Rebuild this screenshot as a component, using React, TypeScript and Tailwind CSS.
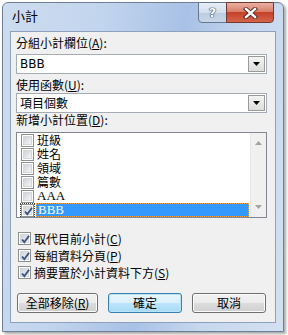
import React from "react";

const cjk = "font-['Noto_Sans_CJK_TC','Noto_Sans_CJK_JP',sans-serif]";

function Box({ checked }: { checked?: boolean }) {
  return (
    <span className="relative flex h-[13px] w-[13px] shrink-0 items-center justify-center border border-[#8e8f8f] bg-white">
      <span className="h-[9px] w-[9px] border border-[#d3d6da] bg-[linear-gradient(135deg,#cfd3d9,#f4f4f4)]" />
      {checked && (
        <svg className="absolute left-[1px] top-[1px]" width="11" height="11" viewBox="0 0 11 11">
          <path d="M2 5.5 L4.3 8.2 L9 1.8" fill="none" stroke="#3b5488" strokeWidth="1.9" />
        </svg>
      )}
    </span>
  );
}

function Combo({ value, latin }: { value: string; latin?: boolean }) {
  return (
    <div className="flex h-[20px] w-[251px] items-center justify-between border border-[#a5acb5] bg-white pl-[3px] pr-[1px]">
      <span className={`text-[12px] leading-[14px] text-black ${latin ? "font-['DejaVu_Sans',sans-serif] text-[11px]" : cjk}`}>
        {value}
      </span>
      <span className="flex h-[16px] w-[17px] items-center justify-center border border-[#9a9a9a] bg-[linear-gradient(#f4f4f4,#dcdcdc)]">
        <svg width="7" height="4" viewBox="0 0 7 4">
          <path d="M0 0 H7 L3.5 4 Z" fill="#000" />
        </svg>
      </span>
    </div>
  );
}

function Btn({ label, primary, w }: { label: React.ReactNode; primary?: boolean; w: string }) {
  return (
    <div
      className={`flex h-[20px] ${w} items-center justify-center rounded-[3px] border text-[12px] leading-[14px] text-black ${cjk} ${
        primary
          ? "border-[#3c7fb1] bg-[linear-gradient(#eaf6fd_0%,#d9f0fc_50%,#bee6fd_50%,#a7d9f5_100%)] shadow-[inset_0_0_0_1px_#b9e3f8]"
          : "border-[#707070] bg-[linear-gradient(#f2f2f2_0%,#ebebeb_50%,#dddddd_50%,#cfcfcf_100%)] shadow-[inset_0_0_0_1px_#fbfbfb]"
      }`}
    >
      {label}
    </div>
  );
}

export default function App() {
  const items = ["班級", "姓名", "領域", "篇數", "AAA", "BBB"];
  return (
    <div className="h-[335px] w-[288px] overflow-hidden bg-white pl-[2px] pt-[2px]">
      <div className="flex h-[330px] w-[282px] flex-col rounded-t-[6px] border border-[#6f7f95] bg-[linear-gradient(100deg,#cddcef_0%,#c2d5ee_30%,#a8c1e6_55%,#c6d7ee_75%,#d3e0f1_100%)] shadow-[2px_2px_3px_rgba(0,0,0,0.35)]">
        {/* title bar */}
        <div className="flex h-[28px] items-start justify-between pl-[9px] pr-[9px]">
          <span className={`pt-[5px] text-[13px] leading-[16px] text-black ${cjk}`}>小計</span>
          <div className="-mt-[1px] flex">
            <div className="flex h-[21px] w-[29px] items-center justify-center rounded-bl-[4px] border border-[#667890] bg-[linear-gradient(#e6edf6_0%,#d4dfed_50%,#bccbe0_51%,#c9d6e7_100%)]">
              <span className="font-['DejaVu_Sans',sans-serif] text-[13px] font-bold leading-none text-white [text-shadow:0_0_1px_#2a3d5a,0_0_1px_#2a3d5a,0_0_1px_#2a3d5a]">
                ?
              </span>
            </div>
            <div className="-ml-[1px] flex h-[21px] w-[48px] items-center justify-center rounded-br-[4px] border border-[#6f3a30] bg-[linear-gradient(#eab0a2_0%,#d8806c_45%,#c6402a_50%,#d4654b_100%)]">
              <svg width="15" height="12" viewBox="0 0 15 12">
                <path d="M3 2 L12 10 M12 2 L3 10" stroke="#4a2620" strokeWidth="4.2" strokeLinecap="square" />
                <path d="M3 2 L12 10 M12 2 L3 10" stroke="#fff" strokeWidth="2.4" strokeLinecap="square" />
              </svg>
            </div>
          </div>
        </div>

        {/* client */}
        <div className="px-[7px]">
          <div className={`flex h-[292px] flex-col border border-[#8da1bf] bg-[#f0f0f0] pl-[5px] text-[12px] text-black ${cjk}`}>
            <div className="mt-[4px] h-[14px] leading-[14px]">
              分組小計欄位(<u>A</u>):
            </div>
            <div className="mt-[4px]">
              <Combo value="BBB" latin />
            </div>
            <div className="mt-[4px] h-[14px] leading-[14px]">
              使用函數(<u>U</u>):
            </div>
            <div className="mt-[1px]">
              <Combo value="項目個數" />
            </div>
            <div className="h-[14px] leading-[14px]">
              新增小計位置(<u>D</u>):
            </div>
            <div className="mt-[5px] flex h-[86px] w-[251px] border border-[#828790] bg-white">
              <div className="flex flex-1 flex-col">
                {items.map((it, i) => {
                  const sel = i === items.length - 1;
                  const latin = /^[A-Z]+$/.test(it);
                  return (
                    <div key={it} className="flex h-[14px] items-center">
                      <span className={`ml-[3px] flex h-[14px] w-[15px] items-center justify-center ${sel ? "border border-dotted border-[#444]" : ""}`}>
                        <Box checked={sel} />
                      </span>
                      <span
                        className={`ml-[1px] flex h-[14px] flex-1 items-center pl-[1px] leading-[12px] ${
                          sel ? "mr-[1px] border border-dotted border-[#f0a040] bg-[#3399ff] text-white" : ""
                        } ${latin ? "font-['Liberation_Serif',serif] text-[13px]" : ""}`}
                      >
                        {it}
                      </span>
                    </div>
                  );
                })}
              </div>
              <div className="flex w-[16px] flex-col items-center justify-between border-l border-[#e6e6e6] bg-[#f0f0f0] py-[8px]">
                <svg width="7" height="4" viewBox="0 0 7 4">
                  <path d="M0 4 H7 L3.5 0 Z" fill="#a3a3a3" />
                </svg>
                <svg width="7" height="4" viewBox="0 0 7 4">
                  <path d="M0 0 H7 L3.5 4 Z" fill="#a3a3a3" />
                </svg>
              </div>
            </div>

            <div className="mt-[12px] flex flex-col pl-[2px]">
              {["取代目前小計(C)", "每組資料分頁(P)", "摘要置於小計資料下方(S)"].map((t) => {
                const k = t.slice(-2, -1);
                return (
                  <div key={t} className="flex h-[17px] items-center gap-[3px]">
                    <Box checked />
                    <span className="leading-[14px]">
                      {t.slice(0, -3)}(<u>{k}</u>)
                    </span>
                  </div>
                );
              })}
            </div>

            <div className="mt-[12px] ml-[1px] flex gap-[10px]">
              <Btn w="w-[81px]" label={<>全部移除(<u>R</u>)</>} />
              <Btn w="w-[74px]" label="確定" primary />
              <Btn w="w-[74px]" label="取消" />
            </div>
          </div>
        </div>
      </div>
    </div>
  );
}
